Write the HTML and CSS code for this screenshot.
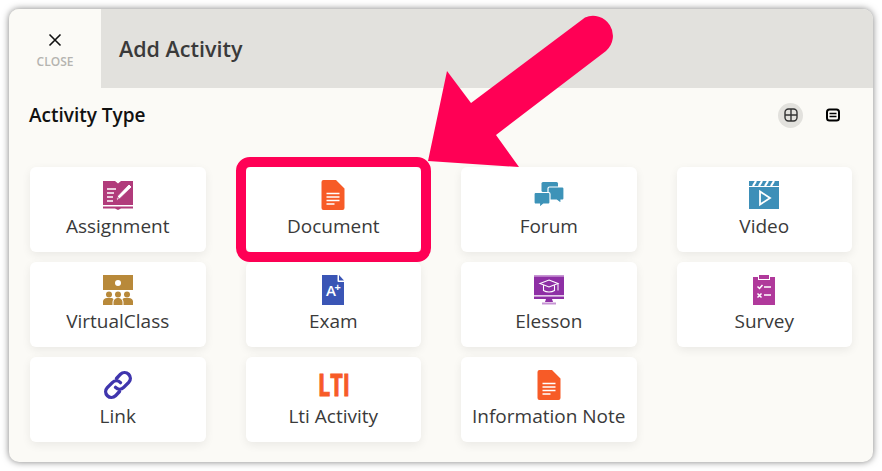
FILE: index.html
```html
<!DOCTYPE html>
<html lang="en">

<head>
    <meta charset="UTF-8">
    <title>Add Activity</title>
    <link rel="stylesheet" href="styles.css">
</head>

<body>
    <div class="window">
        <header class="top">
            <button class="close" type="button">
                <svg width="14" height="14" viewBox="0 0 14 14"><path d="M1.5 1.5l11 11M12.5 1.5l-11 11" stroke="#111" stroke-width="1.6" fill="none"/></svg>
                <span>CLOSE</span>
            </button>
            <h1>Add Activity</h1>
        </header>

        <div class="type-row">
            <h2>Activity Type</h2>
            <div class="views">
                <span class="view active">
                    <svg width="14" height="14" viewBox="0 0 14 14" fill="none" stroke="#333" stroke-width="1.4"><rect x="1" y="1" width="12" height="12" rx="3.5"/><path d="M7 1v12M1 7h12"/></svg>
                </span>
                <span class="view">
                    <svg width="14" height="14" viewBox="0 0 14 14" fill="none" stroke="#000"><rect x="1" y="1.5" width="12" height="11" rx="2.5" stroke-width="2"/><path d="M3.5 5.500h7M3.500 8.500h7" stroke-width="1.600"/></svg>
                </span>
            </div>
        </div>

        <div class="grid">
            <div class="card">
                <svg class="icon" viewBox="0 0 30 30">
                    <path d="M0 1l12 0 3 2.500 3-2.500 12 0v24H0z" fill="#b13b7b"/>
                    <path d="M0 26.500h30v2H18l-3 1.500-3-1.500H0z" fill="#b13b7b"/>
                    <path d="M4 9h9M4 13h7M4 17h6M4 21h6" stroke="#fff" stroke-width="1.500"/>
                    <path d="M13 21l1.500-5L26 4l3 3-12 11.500z" fill="#fff" stroke="#b13b7b" stroke-width="1"/>
                    <path d="M15 19l-1-3 2 2z" fill="#b13b7b"/>
                </svg>
                <span>Assignment</span>
            </div>
            <div class="card picked">
                <svg class="icon" viewBox="0 0 30 30">
                    <path d="M5.500 0H18l8.500 8.500V28a2 2 0 0 1-2 2h-19a2 2 0 0 1-2-2V2a2 2 0 0 1 2-2z" fill="#f75b27"/>
                    <path d="M8.500 13.500h13M8.500 17h13M8.500 20.500h13M8.500 24h8" stroke="#fff" stroke-width="1.300"/>
                </svg>
                <span>Document</span>
            </div>
            <div class="card">
                <svg class="icon" viewBox="0 0 30 30">
                    <path d="M9 2h13.500A1.500 1.500 0 0 1 24 3.500V12H9a1.500 1.500 0 0 1-1.500-1.500v-7A1.500 1.500 0 0 1 9 2z" fill="#3d93b8"/>
                    <path d="M15.500 7h13a1.500 1.500 0 0 1 1.500 1.500v10a1.500 1.500 0 0 1-1.500 1.500H27v3.500L22.500 20h-7a1.500 1.500 0 0 1-1.500-1.500v-10A1.500 1.500 0 0 1 15.500 7z" fill="#3d93b8" stroke="#fff" stroke-width="1.200"/>
                    <path d="M1.500 12.500h13a1.500 1.500 0 0 1 1.500 1.500v8.500a1.500 1.500 0 0 1-1.500 1.500H9.500L5.500 27.500V24h-4A1.500 1.500 0 0 1 0 22.500V14a1.500 1.500 0 0 1 1.500-1.500z" fill="#3d93b8" stroke="#fff" stroke-width="1.200"/>
                </svg>
                <span>Forum</span>
            </div>
            <div class="card">
                <svg class="icon" viewBox="0 0 30 30">
                    <rect x="0" y="1" width="30" height="5" fill="#3d8fb8"/>
                    <path d="M4 6l3-5M10 6l3-5M16 6l3-5M22 6l3-5" stroke="#fff" stroke-width="2.200"/>
                    <rect x="0" y="7" width="30" height="22" fill="#3d8fb8"/>
                    <path d="M11 11.500v13L21 18z" fill="none" stroke="#fff" stroke-width="1.800"/>
                </svg>
                <span>Video</span>
            </div>
            <div class="card">
                <svg class="icon" viewBox="0 0 30 30">
                    <rect x="0" y="0" width="30" height="15" fill="#b8893a"/>
                    <circle cx="15" cy="8" r="3" fill="#fff"/>
                    <g fill="#b8893a">
                        <circle cx="6" cy="19.500" r="3"/><circle cx="15" cy="19.500" r="3"/><circle cx="24" cy="19.500" r="3"/>
                        <path d="M0 30v-3.500c0-2 2-3.500 4-3.500h4c1 0 2 .5 2.500 1.300-.6.8-1 1.600-1 2.700V30z"/>
                        <path d="M10.500 30v-3c0-2 2-4 4-4h1c2 0 4 2 4 4v3z"/>
                        <path d="M30 30v-3.500c0-2-2-3.500-4-3.500h-4c-1 0-2 .5-2.500 1.300.6.8 1 1.600 1 2.700V30z"/>
                    </g>
                </svg>
                <span>VirtualClass</span>
            </div>
            <div class="card">
                <svg class="icon" viewBox="0 0 30 30">
                    <path d="M4 0h15.500v6a1 1 0 0 0 1 1H26v23H4z" fill="#3a55b5"/>
                    <path d="M21 0l5 5.500h-5z" fill="#3a55b5"/>
                    <text x="8" y="21" class="exam-a">A</text>
                    <text x="16.500" y="16" class="exam-plus">+</text>
                </svg>
                <span>Exam</span>
            </div>
            <div class="card">
                <svg class="icon" viewBox="0 0 30 30">
                    <rect x="0" y="0" width="30" height="1.500" fill="#c794d4"/>
                    <rect x="0" y="1.500" width="30" height="19" fill="#8e2fa5"/>
                    <rect x="0" y="20.500" width="30" height="1" fill="#fff"/>
                    <rect x="0" y="21.500" width="30" height="2.500" fill="#8e2fa5"/>
                    <path d="M12 24h6l1 3h-8z" fill="#8e2fa5"/>
                    <rect x="8" y="27.500" width="14" height="2" fill="#c794d4"/>
                    <path d="M15 5l9 3.500-9 3.500-9-3.500zM9.500 10.500v5c3 2 8 2 11 0v-5" fill="none" stroke="#fff" stroke-width="1.100"/>
                    <path d="M24 8.500v7" stroke="#fff" stroke-width="1"/>
                </svg>
                <span>Elesson</span>
            </div>
            <div class="card">
                <svg class="icon" viewBox="0 0 30 30">
                    <path d="M4 2h5v3h12V2h5v28H4z" fill="#b0399b"/>
                    <rect x="10" y="0" width="10" height="4" fill="#b0399b"/>
                    <path d="M8.500 11.500l2 2 3-3.500M8.500 18.500l4 4M12.500 18.500l-4 4" fill="none" stroke="#fff" stroke-width="1.500"/>
                    <path d="M15 12h7M15 20h7" stroke="#fff" stroke-width="1.500"/>
                </svg>
                <span>Survey</span>
            </div>
            <div class="card">
                <svg class="icon" viewBox="0 0 30 30" fill="none" stroke="#3f35ad" stroke-width="3.400" stroke-linecap="round">
                    <path d="M13.500 8.500l4-4.300a5.800 5.800 0 0 1 8.200 8.200l-5 5a5.800 5.800 0 0 1-8.200 0"/>
                    <path d="M16.500 21.500l-4 4.300a5.800 5.800 0 0 1-8.200-8.200l5-5a5.800 5.800 0 0 1 8.200 0"/>
                </svg>
                <span>Link</span>
            </div>
            <div class="card">
                <svg class="icon" viewBox="0 0 30 30">
                    <text x="0" y="26" transform="scale(0.72 1)" class="lti">LTI</text>
                </svg>
                <span>Lti Activity</span>
            </div>
            <div class="card">
                <svg class="icon" viewBox="0 0 30 30">
                    <path d="M5.500 0H18l8.500 8.500V28a2 2 0 0 1-2 2h-19a2 2 0 0 1-2-2V2a2 2 0 0 1 2-2z" fill="#f75b27"/>
                    <path d="M8.500 13.500h13M8.500 17h13M8.500 20.500h13M8.500 24h8" stroke="#fff" stroke-width="1.300"/>
                </svg>
                <span>Information Note</span>
            </div>
        </div>
    </div>

    <!-- red arrow drawn on top of the screenshot -->
    <svg class="arrow" width="882" height="471" viewBox="0 0 882 471">
        <path d="M428 161L447 71L471 103L585 17.500A20 20 0 0 1 606 51L496 135L519 167z" fill="#ff0055"/>
    </svg>
</body>

</html>
```

FILE: styles.css
```css
body {
    margin: 0;
    background-color: #fff;
    font-family: 'Open Sans', 'Noto Sans', sans-serif;
    color: #3a3a3a;
    height: 471px;
    overflow: hidden;
}

.window {
    margin: 9px 9px 0;
    height: 453px;
    background-color: #fbfaf6;
    border-radius: 10px;
    overflow: hidden;
    box-shadow: 0 0 7px rgba(0, 0, 0, 0.5);
}

.top {
    display: flex;
    align-items: center;
    height: 79px;
    background-color: #e2e1dd;
}

.close {
    width: 92px;
    height: 79px;
    padding: 24px 0 0;
    border: 0;
    display: flex;
    flex-direction: column;
    align-items: center;
    gap: 8px;
    background-color: #fbfaf6;
    font-family: inherit;
}

.close span {
    font-size: 12px;
    line-height: 14px;
    font-weight: 600;
    color: #b5b4b0;
}

h1 {
    margin: 0 0 0 18px;
    font-size: 21.5px;
    font-weight: 600;
    color: #3a3a3a;
}

.type-row {
    display: flex;
    align-items: center;
    justify-content: space-between;
    height: 54px;
    padding: 0 28px 0 20px;
}

h2 {
    margin: 0;
    font-size: 19px;
    font-weight: 600;
    color: #111;
}

.views {
    display: flex;
    gap: 17px;
}

.view {
    width: 25px;
    height: 25px;
    display: flex;
    align-items: center;
    justify-content: center;
    border-radius: 50%;
}

.active {
    background-color: #e2e1dd;
}

.grid {
    display: grid;
    grid-template-columns: repeat(4, 1fr);
    grid-auto-rows: 85px;
    gap: 10px 40px;
    padding: 25px 21px 0;
}

.card {
    position: relative;
    display: flex;
    flex-direction: column;
    align-items: center;
    padding-top: 13px;
    box-sizing: border-box;
    background-color: #fff;
    border-radius: 6px;
    box-shadow: 0 3px 10px rgba(0, 0, 0, 0.07);
    font-size: 19px;
    line-height: 24px;
    white-space: nowrap;
}

.icon {
    width: 30px;
    height: 30px;
    margin-bottom: 4px;
    overflow: visible;
}

.picked::after {
    content: "";
    position: absolute;
    top: -10px;
    right: -10px;
    bottom: -10px;
    left: -10px;
    border: 10px solid #ff0055;
    border-radius: 14px;
}

.exam-a {
    font-family: 'Open Sans', sans-serif;
    font-size: 15px;
    font-weight: 600;
    fill: #fff;
}

.exam-plus {
    font-family: 'Open Sans', sans-serif;
    font-size: 11px;
    font-weight: 700;
    fill: #fff;
}

.lti {
    font-family: 'Open Sans', sans-serif;
    font-size: 30px;
    font-weight: 700;
    fill: #f75b27;
    stroke: #f75b27;
    stroke-width: 1;
}

.arrow {
    position: absolute;
    top: 0;
    left: 0;
    pointer-events: none;
}
```
